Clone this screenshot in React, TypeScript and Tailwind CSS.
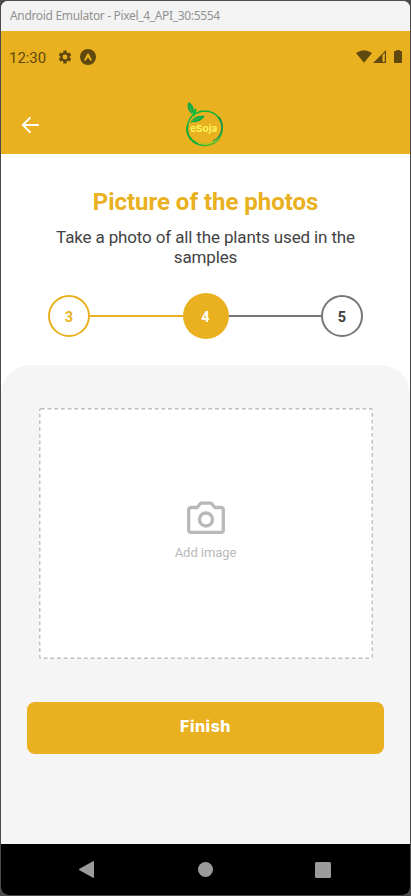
import React from "react";

function WindowTitle() {
  return (
    <div className="h-[30px] shrink-0 bg-[#f3f3f3] pl-[9px] text-[12px] leading-[30px] tracking-[-0.33px] text-[#929292] font-['Noto_Sans',sans-serif] whitespace-nowrap">
      Android Emulator - Pixel_4_API_30:5554
    </div>
  );
}

function StatusBar() {
  return (
    <div className="flex h-[52px] items-center pl-[8px] pr-[8px] text-[#60490e]">
      <span className="w-[48px] pt-[2px] text-[15px] leading-none tracking-[-0.05px]">12:30</span>
      <svg className="-mt-px h-[16px] w-[16px]" viewBox="0 0 24 24" fill="currentColor">
        <path d="M19.14 12.94c.04-.3.06-.61.06-.94s-.02-.64-.07-.94l2.03-1.58a.5.5 0 0 0 .12-.61l-1.92-3.32a.49.49 0 0 0-.59-.22l-2.39.96a7 7 0 0 0-1.62-.94l-.36-2.54a.48.48 0 0 0-.48-.41h-3.84a.47.47 0 0 0-.47.41l-.36 2.54a7.3 7.3 0 0 0-1.62.94l-2.39-.96a.47.47 0 0 0-.59.22L2.74 8.87a.48.48 0 0 0 .12.61l2.03 1.58a6 6 0 0 0 0 1.88l-2.03 1.58a.5.5 0 0 0-.12.61l1.92 3.32c.12.22.37.29.59.22l2.39-.96c.5.38 1.03.7 1.62.94l.36 2.54c.05.24.24.41.48.41h3.84c.24 0 .44-.17.47-.41l.36-2.54a7 7 0 0 0 1.62-.94l2.39.96c.22.08.47 0 .59-.22l1.92-3.32a.47.47 0 0 0-.12-.61zM12 15.6a3.6 3.6 0 1 1 0-7.2 3.6 3.6 0 0 1 0 7.2z" />
      </svg>
      <svg className="-mt-px ml-[7px] h-[16px] w-[16px]" viewBox="0 0 16 16">
        <circle cx="8" cy="8" r="8" fill="currentColor" />
        <path d="M4 11.2 7.1 5q.9-1.2 1.8 0l3.1 6.2-1.2.9L8 8.4 5.2 12.1z" fill="#e9b020" />
      </svg>
      <div className="-mt-px ml-auto flex items-center">
        <svg className="h-[13px] w-[16px]" viewBox="0 0 16 13" fill="currentColor">
          <path d="M0 3.1Q8-2.7 16 3.1L8 12.8z" />
        </svg>
        <svg className="ml-px h-[13px] w-[13px]" viewBox="0 0 13 13" fill="currentColor">
          <path fillRule="evenodd" d="M0 13 13 0v13zM9.5 5v6.8h2.3V2.7z" />
        </svg>
        <svg className="ml-[8px] h-[13px] w-[8px]" viewBox="0 0 8 13" fill="currentColor">
          <path d="M2.2 0h3.6v1H7a1 1 0 0 1 1 1v10a1 1 0 0 1-1 1H1a1 1 0 0 1-1-1V2a1 1 0 0 1 1-1h1.2z" />
        </svg>
      </div>
    </div>
  );
}

function Logo() {
  return (
    <svg className="h-[50px] w-[46px]" viewBox="0 0 46 50" fill="none">
      <defs>
        <linearGradient id="ring" x1="0" y1="0" x2="1" y2="1">
          <stop offset="0" stopColor="#08b53a" />
          <stop offset="0.6" stopColor="#16b43a" />
          <stop offset="1" stopColor="#60bd31" />
        </linearGradient>
      </defs>
      <path d="M11 13C2 21 2 35 11 41c10 7 23 3 27-7 4-12-4-24-16-24-4 0-7 1-9 3" stroke="url(#ring)" strokeWidth="1.5" />
      <path d="M36 16c6 9 3 20-6 24" stroke="#13914a" strokeWidth="1.4" />
      <path d="M12 39c8 6 18 4 24-4-5 9-16 12-24 4" fill="#9dcc24" />
      <path d="M4.8 24C2 33 8 40 15 43" stroke="#07ae3b" strokeWidth="1.8" />
      <path d="M9 13C5 10 3 5 6 1c5 4 6 8 3 12z" fill="#11a849" />
      <path d="M10 16c-1-4 0-7 3-9 1 4 0 7-3 9z" fill="#07bd37" />
      <path d="M7 23c2-6 7-9 15-8-4 5-8 7-13 6z" fill="#09aa42" />
      <path d="m9 20 8-3M6 5l4 8" stroke="#7abf2c" strokeWidth=".7" />
      <text x="20.7" y="30.6" textAnchor="middle" textLength="27" lengthAdjust="spacingAndGlyphs" fill="#faf45b" fontFamily="Inter, sans-serif" fontSize="9.6" fontWeight="700">eSoja</text>
    </svg>
  );
}

function Header() {
  return (
    <header className="h-[123px] shrink-0 bg-[#e9b020]">
      <StatusBar />
      <div className="grid h-[71px] grid-cols-[1fr_46px_1fr]">
        <button className="ml-[20px] mt-[33px] h-[18px] w-[19px]" aria-label="Back">
          <svg className="h-[18px] w-[19px]" viewBox="0 0 19 18" fill="none" stroke="white" strokeWidth="1.9" strokeLinecap="round" strokeLinejoin="round">
            <path d="M17.2 9H2M9 1.8 1.8 9 9 16.2" />
          </svg>
        </button>
        <div className="mt-[18px] h-[50px]"><Logo /></div>
        <div />
      </div>
    </header>
  );
}

function Stepper() {
  return (
    <div className="ml-[47px] flex h-[46px] w-[315px] items-center text-[14.5px] font-bold leading-none">
      <div className="flex h-[42px] w-[42px] shrink-0 items-center justify-center rounded-full border-2 border-[#e9b020] pt-[4px] text-[#e9b020]">3</div>
      <div className="h-[2px] flex-1 bg-[#e9b020]" />
      <div className="flex h-[46px] w-[46px] shrink-0 items-center justify-center rounded-full bg-[#e9b020] pt-[4px] text-white">4</div>
      <div className="h-[2px] flex-1 bg-[#777777]" />
      <div className="flex h-[42px] w-[42px] shrink-0 items-center justify-center rounded-full border-2 border-[#777777] pt-[4px] text-[#3d3d3d]">5</div>
    </div>
  );
}

function Intro() {
  return (
    <section className="h-[211px] shrink-0 bg-white pt-[33px] text-center">
      <h1 className="h-[30px] text-[24px] font-bold leading-[30px] tracking-[-0.03px] text-[#e9b020]">Picture of the photos</h1>
      <p className="mb-[26px] mt-[10px] h-[40px] text-[17px] leading-[20px] tracking-[-0.14px] text-[#434343]">
        Take a photo of all the plants used in the<br />samples
      </p>
      <Stepper />
    </section>
  );
}

function ImagePicker() {
  return (
    <button className="relative mx-auto flex h-[251px] w-[334px] flex-col items-center bg-white pt-[93px] text-[#b9b9b9]">
      <svg className="absolute inset-0 h-full w-full" viewBox="0 0 334 251" fill="none">
        <rect x=".75" y=".75" width="332.5" height="249.5" rx="1" stroke="#bfbfbf" strokeWidth="1.4" strokeDasharray="4 2.7" />
      </svg>
      <svg className="h-[33px] w-[38px]" viewBox="0 0 38 33" fill="none" stroke="currentColor" strokeWidth="3.3" strokeLinejoin="round">
        <path d="M4 6.5h6.2l3-3.7q.5-.7 1.4-.7h8.8q.9 0 1.4.7l3 3.7H34a2.3 2.3 0 0 1 2.3 2.3v20.4a2.3 2.3 0 0 1-2.3 2.3H4a2.3 2.3 0 0 1-2.3-2.3V8.8A2.3 2.3 0 0 1 4 6.5z" />
        <circle cx="19" cy="18.5" r="6.5" />
      </svg>
      <span className="mt-[11px] text-[13px] leading-[16px] tracking-[-0.07px]">Add image</span>
    </button>
  );
}

export default function App() {
  return (
    <main className="h-[896px] w-[411px] overflow-hidden bg-[#4b4a4d] p-px font-[Roboto,sans-serif]">
      <div className="flex h-[894px] w-[409px] flex-col overflow-hidden rounded-[7px] bg-white">
        <WindowTitle />
        <Header />
        <Intro />
        <section className="h-[479px] shrink-0 rounded-t-[29px] bg-[#f5f5f5] pt-[43px]">
          <ImagePicker />
          <button className="ml-[26px] mt-[43px] flex h-[52px] w-[357px] items-center justify-center rounded-[8px] bg-[#e9b020] pb-[4px] font-['Inter',sans-serif] text-[16px] font-extrabold tracking-[0.5px] text-white">
            Finish
          </button>
        </section>
        <nav className="flex h-[51px] shrink-0 items-center bg-black pl-[78px] text-[#9b9b9b]">
          <svg className="h-[17px] w-[16px]" viewBox="0 0 16 17" fill="currentColor"><path d="M.5 7.7 14 .2q1-.4 1 .6v15.4q0 1-1 .5L.5 9.2q-1-.7 0-1.5z" /></svg>
          <span className="ml-[103px] h-[15px] w-[15px] rounded-full bg-[#9b9b9b]" />
          <span className="ml-[102px] h-[16px] w-[16px] rounded-[1.5px] bg-[#9b9b9b]" />
        </nav>
      </div>
    </main>
  );
}
